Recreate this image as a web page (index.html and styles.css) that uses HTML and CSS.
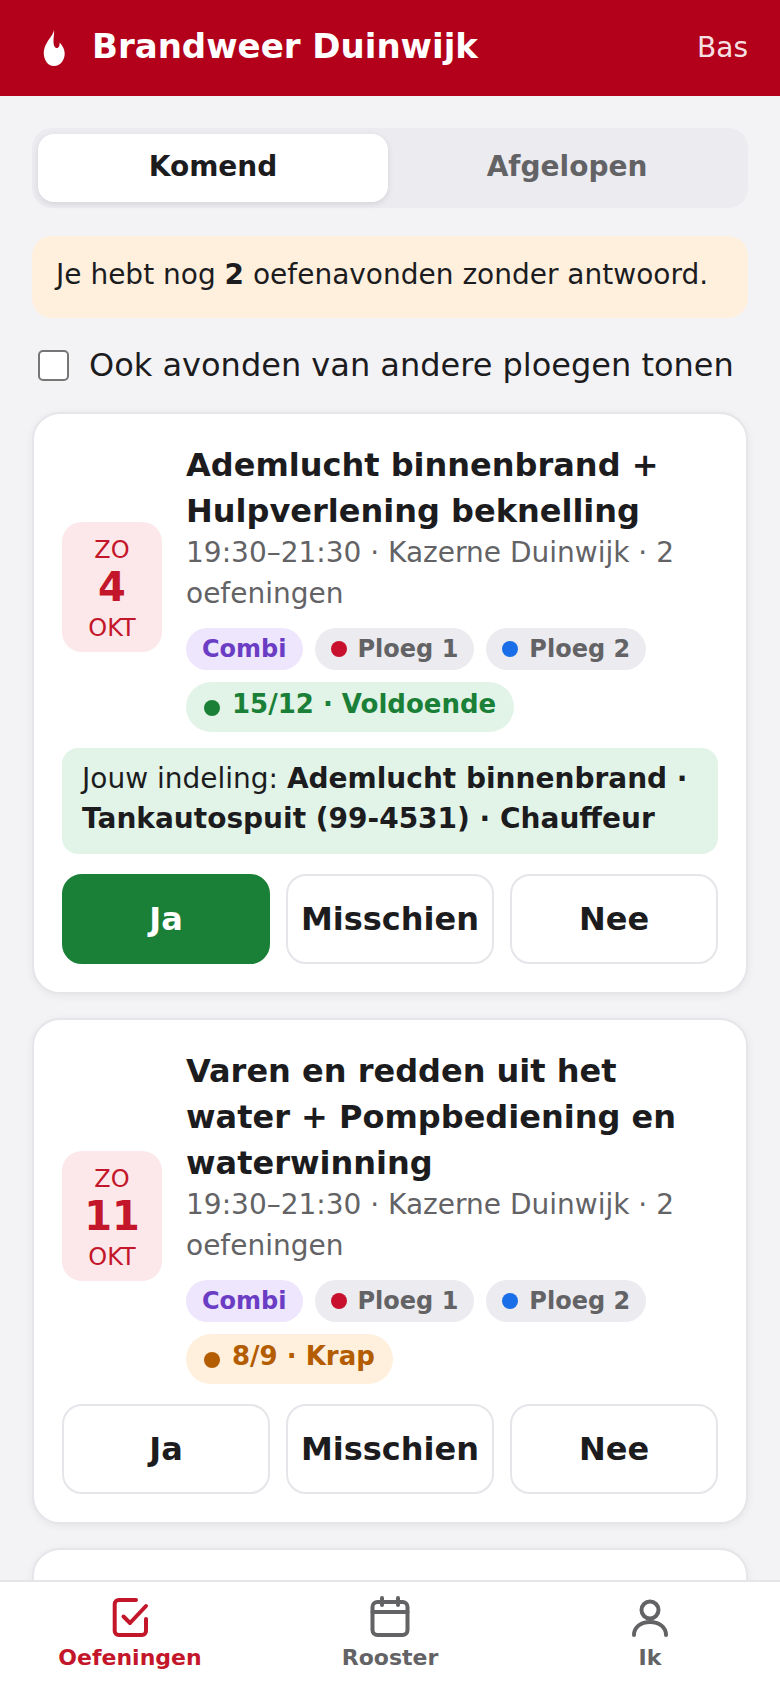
FILE: index.html
```html
<!DOCTYPE html>
<html lang="nl">
<head>
<meta charset="utf-8">
<title>Brandweer Duinwijk</title>
<link rel="stylesheet" href="styles.css">
</head>
<body>
<div class="app">
  <header class="topbar">
    <div class="brand">
      <svg class="flame" viewBox="0 0 22 36" aria-hidden="true"><path d="M11 0C10 6 4 10 1.500 18C-1 26 3 36 11 36C19 36 23.500 27 21 19.500C20 17 18.500 14 16.500 12.500C17 16 15.500 18.500 13.500 18C11 17.500 10.500 14 10.500 11C10.500 7 11.500 3 11 0Z" fill="#fff"/></svg>
      <span class="brand-name">Brandweer Duinwijk</span>
    </div>
    <span class="user">Bas</span>
  </header>
  <main class="content">
    <div class="tabs">
      <div class="tab tab-active">Komend</div>
      <div class="tab">Afgelopen</div>
    </div>
    <div class="notice">Je hebt nog <b>2</b> oefenavonden zonder antwoord.</div>
    <label class="toggle"><span class="check"></span><span>Ook avonden van andere ploegen tonen</span></label>

    <article class="card">
      <div class="card-top">
        <div class="date"><span class="dow">ZO</span><span class="day">4</span><span class="mon">OKT</span></div>
        <div class="info">
          <h2 class="title">Ademlucht binnenbrand + Hulpverlening beknelling</h2>
          <p class="meta">19:30–21:30 · Kazerne Duinwijk · 2 oefeningen</p>
          <div class="chips">
            <span class="chip chip-purple">Combi</span>
            <span class="chip chip-gray"><i class="dot dot-red"></i>Ploeg 1</span>
            <span class="chip chip-gray"><i class="dot dot-blue"></i>Ploeg 2</span>
            <span class="chip chip-status chip-green"><i class="sdot"></i><span class="status-text">15/12 · Voldoende</span></span>
          </div>
        </div>
      </div>
      <div class="assign">Jouw indeling: <b>Ademlucht binnenbrand · Tankautospuit (99-4531) · Chauffeur</b></div>
      <div class="actions">
        <div class="btn btn-yes">Ja</div>
        <div class="btn">Misschien</div>
        <div class="btn">Nee</div>
      </div>
    </article>

    <article class="card">
      <div class="card-top">
        <div class="date"><span class="dow">ZO</span><span class="day">11</span><span class="mon">OKT</span></div>
        <div class="info">
          <h2 class="title">Varen en redden uit het water + Pompbediening en waterwinning</h2>
          <p class="meta">19:30–21:30 · Kazerne Duinwijk · 2 oefeningen</p>
          <div class="chips">
            <span class="chip chip-purple">Combi</span>
            <span class="chip chip-gray"><i class="dot dot-red"></i>Ploeg 1</span>
            <span class="chip chip-gray"><i class="dot dot-blue"></i>Ploeg 2</span>
            <span class="chip chip-status chip-orange"><i class="sdot"></i><span class="status-text">8/9 · Krap</span></span>
          </div>
        </div>
      </div>
      <div class="actions">
        <div class="btn">Ja</div>
        <div class="btn">Misschien</div>
        <div class="btn">Nee</div>
      </div>
    </article>

    <article class="card card-next"></article>
  </main>
  <nav class="tabbar">
    <div class="nav-item nav-active">
      <svg class="nav-icon" viewBox="0 0 48 48" aria-hidden="true"><path d="M30 6H12.700a4 4 0 0 0-4 4v27a4 4 0 0 0 4 4H36a4 4 0 0 0 4-4V25M17.500 22.500L24 29L40 12"/></svg>
      <span>Oefeningen</span>
    </div>
    <div class="nav-item">
      <svg class="nav-icon" viewBox="0 0 48 48" aria-hidden="true"><rect x="6.500" y="8" width="35" height="33" rx="5"/><path d="M6.500 18h35M16 4v7M32 4v7"/></svg>
      <span>Rooster</span>
    </div>
    <div class="nav-item">
      <svg class="nav-icon" viewBox="0 0 48 48" aria-hidden="true"><circle cx="24" cy="16" r="8.500"/><path d="M8 41C8 33 15 28 24 28S40 33 40 41"/></svg>
      <span>Ik</span>
    </div>
  </nav>
</div>
</body>
</html>
```
FILE: styles.css
```css
* { box-sizing: border-box; }
html, body { margin: 0; padding: 0; height: 100%; }
body { font-family: "DejaVu Sans", sans-serif; color: #1c1c1e; background: #f3f3f6; }
.app { height: 1688px; display: flex; flex-direction: column; overflow: hidden; }

.topbar { flex: none; height: 96px; background: #b3001b; color: #fff; display: flex; align-items: center; justify-content: space-between; padding: 0 32px 0 43px; }
.brand { display: flex; align-items: center; gap: 27px; }
.flame { width: 22px; height: 36px; display: block; }
.brand-name { font-size: 34px; font-weight: 700; padding-bottom: 4px; }
.user { font-size: 28px; color: rgba(255,255,255,.9); padding-bottom: 2px; }

.content { flex: 1; min-height: 0; overflow: hidden; padding: 32px 32px 0; }

.tabs { display: flex; height: 80px; padding: 6px; gap: 4px; background: #ebebf0; border-radius: 20px; }
.tab { flex: 1; display: flex; align-items: center; justify-content: center; padding-bottom: 4px; font-size: 28px; font-weight: 700; color: #636366; border-radius: 16px; }
.tab-active { background: #fff; color: #1c1c1e; box-shadow: 0 2px 6px rgba(0,0,0,.1); }

.notice { margin-top: 28px; padding: 18px 24px 23px; background: #fff0de; border-radius: 20px; font-size: 28px; line-height: 41px; }

.toggle { display: flex; align-items: center; gap: 20px; margin-top: 24px; padding-left: 6px; font-size: 32px; line-height: 46px; }
.check { width: 31px; height: 31px; border: 2px solid #767676; border-radius: 5px; background: #fff; flex: none; }

.card { margin-top: 24px; padding: 28px; background: #fff; border: 2px solid #e5e5ea; border-radius: 28px; box-shadow: 0 2px 8px rgba(0,0,0,.06); }
.card-next { height: 200px; }
.card-top { display: flex; align-items: center; gap: 24px; }
.date { flex: none; width: 100px; padding: 12px 0 8px; display: flex; flex-direction: column; align-items: center; background: #fce8ea; border-radius: 20px; color: #c4162a; }
.dow, .mon { font-size: 24px; line-height: 32px; }
.mon { margin-top: 4px; }
.day { font-size: 40px; line-height: 42px; font-weight: 700; }
.info { flex: 1; min-width: 0; }
.title { margin: 0; font-size: 32px; line-height: 46px; font-weight: 700; }
.meta { margin: -2px 0 0; font-size: 28px; line-height: 41px; color: #636366; }
.chips { display: flex; flex-wrap: wrap; gap: 12px; margin-top: 14px; }
.chip { display: inline-flex; align-items: center; height: 42px; padding: 0 16px; border-radius: 21px; font-size: 24px; font-weight: 700; }
.chip-purple { background: #eee6fd; color: #6a3dc4; }
.chip-gray { background: #ebebf0; color: #636366; }
.dot { width: 16px; height: 16px; border-radius: 50%; margin-right: 11px; }
.dot-red { background: #c8102e; }
.dot-blue { background: #1a6fe8; }
.chip-status { height: 50px; border-radius: 25px; padding: 0 18px; font-size: 26px; }
.sdot { width: 16px; height: 16px; border-radius: 50%; margin-right: 12px; margin-top: 2px; background: currentColor; }
.status-text { padding-bottom: 6px; }
.chip-green { background: #e2f4e8; color: #1a7f37; }
.chip-orange { background: #fff0de; color: #b35c00; }

.assign { margin-top: 16px; padding: 11px 20px 15px; background: #e2f4e8; border-radius: 16px; font-size: 28px; line-height: 40px; }
.actions { display: flex; gap: 16px; margin-top: 20px; }
.btn { flex: 1; height: 90px; display: flex; align-items: center; justify-content: center; border: 2px solid #e5e5ea; border-radius: 20px; background: #fff; font-size: 32px; font-weight: 700; }
.btn-yes { background: #1a7f37; border-color: #1a7f37; color: #fff; }

.tabbar { flex: none; height: 108px; background: #fff; border-top: 2px solid #e5e5ea; display: flex; padding-top: 12px; }
.nav-item { flex: 1; display: flex; flex-direction: column; align-items: center; gap: 3px; font-size: 22px; font-weight: 700; color: #636366; }
.nav-active { color: #c4162a; }
.nav-icon { width: 48px; height: 48px; fill: none; stroke: currentColor; stroke-width: 4; stroke-linecap: round; stroke-linejoin: round; }
```
